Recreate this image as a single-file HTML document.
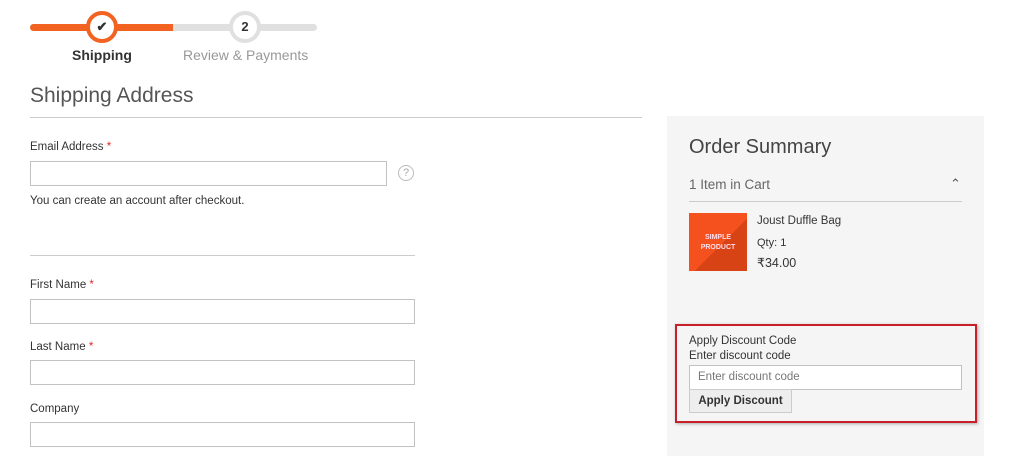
<!DOCTYPE html><html><head><style>
body{margin:0;width:1024px;height:449px;background:#fff;font-family:"Liberation Sans",sans-serif;color:#333;position:relative;overflow:hidden}
.a{position:absolute}
.inp{position:absolute;border:1px solid #c2c2c2;background:#fff;box-sizing:border-box;height:25px}
.lbl{position:absolute;font-size:11.5px;color:#333}
.lbl b{color:#e02b27;font-weight:normal}
</style></head><body>
<div class="a" style="left:30px;top:24px;width:287px;height:7px;background:#e0e0e0;border-radius:4px"></div>
<div class="a" style="left:30px;top:24px;width:143px;height:7px;background:#f26322;border-radius:4px 0 0 4px"></div>
<div class="a" style="left:86px;top:11px;width:24px;height:24px;border:4px solid #f26322;border-radius:50%;background:#fff;text-align:center;line-height:24px;font-size:13px;font-weight:bold">✔</div>
<div class="a" style="left:229px;top:11px;width:24px;height:24px;border:4px solid #e0e0e0;border-radius:50%;background:#fff;text-align:center;line-height:24px;font-size:13px;font-weight:bold">2</div>
<div class="a" style="left:72px;top:47px;font-size:14px;font-weight:bold;color:#333">Shipping</div>
<div class="a" style="left:183px;top:47px;font-size:14px;color:#999">Review &amp; Payments</div>
<div class="a" style="left:30px;top:84px;font-size:21px;font-weight:300;color:#555">Shipping Address</div>
<div class="a" style="left:30px;top:117px;width:612px;height:1px;background:#ccc"></div>
<div class="lbl" style="left:30px;top:141px">Email Address <b>*</b></div>
<div class="inp" style="left:30px;top:161px;width:357px"></div>
<div class="a" style="left:398px;top:165px;width:14px;height:14px;border:1.5px solid #bbb;border-radius:50%;color:#aaa;font-size:11px;text-align:center;line-height:14px">?</div>
<div class="lbl" style="left:30px;top:195px">You can create an account after checkout.</div>
<div class="a" style="left:30px;top:255px;width:385px;height:1px;background:#ccc"></div>
<div class="lbl" style="left:30px;top:279px">First Name <b>*</b></div>
<div class="inp" style="left:30px;top:299px;width:385px"></div>
<div class="lbl" style="left:30px;top:341px">Last Name <b>*</b></div>
<div class="inp" style="left:30px;top:360px;width:385px"></div>
<div class="lbl" style="left:30px;top:403px">Company</div>
<div class="inp" style="left:30px;top:422px;width:385px"></div>

<div class="a" style="left:667px;top:116px;width:317px;height:340px;background:#f5f5f5"></div>
<div class="a" style="left:689px;top:136px;font-size:20px;font-weight:300;color:#444">Order Summary</div>
<div class="a" style="left:689px;top:177px;font-size:13.5px;color:#666">1 Item in Cart</div>
<div class="a" style="left:950px;top:176px;font-size:13px;color:#555">&#8963;</div>
<div class="a" style="left:689px;top:201px;width:273px;height:1px;background:#ccc"></div>
<div class="a" style="left:689px;top:213px;width:58px;height:58px;background:linear-gradient(135deg,#f4511e 55%,#d84315 55%);color:#fde;font-size:7px;font-weight:bold;text-align:center;line-height:10px;padding-top:20px;box-sizing:border-box">SIMPLE<br>PRODUCT</div>
<div class="a" style="left:757px;top:215px;font-size:11.5px">Joust Duffle Bag</div>
<div class="a" style="left:757px;top:237px;font-size:11px">Qty: 1</div>
<div class="a" style="left:757px;top:255px;font-size:12.5px">₹34.00</div>
<div class="a" style="left:675px;top:324px;width:302px;height:99px;border:2px solid #c8202a;box-sizing:border-box;box-shadow:1px 1px 3px rgba(0,0,0,.3)"></div>
<div class="a" style="left:689px;top:335px;font-size:11.5px">Apply Discount Code</div>
<div class="a" style="left:689px;top:350px;font-size:11.5px">Enter discount code</div>
<div class="inp" style="left:689px;top:365px;width:273px;font-size:11.5px;color:#777;padding:5px 8px">Enter discount code</div>
<div class="a" style="left:689px;top:389px;width:103px;height:24px;background:#eee;border:1px solid #ccc;box-sizing:border-box;font-size:11.5px;font-weight:bold;text-align:center;line-height:22px">Apply Discount</div>
</body></html>
